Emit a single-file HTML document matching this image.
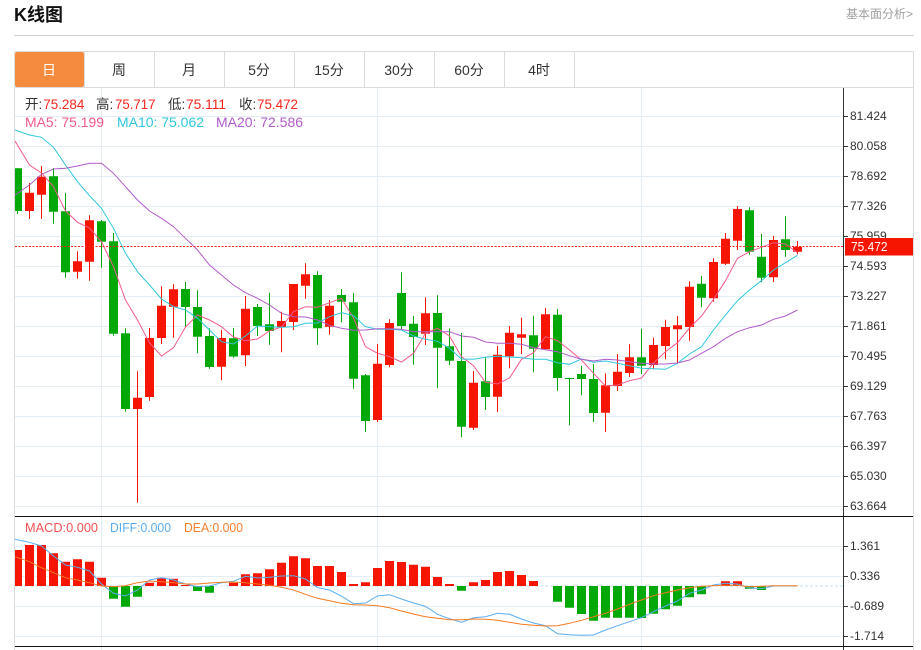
<!DOCTYPE html>
<html><head><meta charset="utf-8"><title>K线图</title>
<style>
html,body{margin:0;padding:0;background:#fff;width:921px;height:650px;overflow:hidden}
svg{display:block}
text{font-family:"Liberation Sans","Noto Sans CJK SC",sans-serif}
</style></head><body>
<svg width="921" height="650" viewBox="0 0 921 650" xmlns="http://www.w3.org/2000/svg">
<text x="14" y="21" font-size="18" font-weight="bold" fill="#111">K线图</text>
<text x="846" y="18" font-size="12" fill="#a0a0a0" textLength="67" lengthAdjust="spacingAndGlyphs">基本面分析&gt;</text>
<path d="M14 35.5H914" stroke="#cfcfcf" fill="none"/>
<path d="M14 51.5H914M14 87.5H914M14.5 51V650M913.5 51V650M84.5 52V87M154.5 52V87M224.5 52V87M294.5 52V87M364.5 52V87M434.5 52V87M504.5 52V87M574.5 52V87" stroke="#dcdcdc" fill="none"/>
<rect x="15" y="52" width="69" height="35" rx="2" fill="#F58B3F"/>
<g font-size="14" fill="#333" text-anchor="middle">
<text x="49" y="75" fill="#fff">日</text>
<text x="119" y="75">周</text>
<text x="189" y="75">月</text>
<text x="259" y="75">5分</text>
<text x="329" y="75">15分</text>
<text x="399" y="75">30分</text>
<text x="469" y="75">60分</text>
<text x="539" y="75">4时</text>
</g>
<path d="M15 116.5H843M15 146.5H843M15 176.5H843M15 206.5H843M15 236.5H843M15 266.5H843M15 296.5H843M15 326.5H843M15 356.5H843M15 386.5H843M15 416.5H843M15 446.5H843M15 476.5H843M15 506.5H843M15 546.5H843M15 576.5H843M15 606.5H843M15 636.5H843M101.5 88V650M377.5 88V650M641.5 88V650" stroke="#E4EDF3" fill="none"/>
<g font-size="13.5">
<g fill="#333"><text x="25" y="109" font-size="13.5">开:</text><text x="96" y="109">高:</text><text x="168" y="109">低:</text><text x="239" y="109">收:</text></g>
<g fill="#F5261E"><text x="43.3" y="109" textLength="41" lengthAdjust="spacingAndGlyphs">75.284</text><text x="115" y="109" textLength="40.5" lengthAdjust="spacingAndGlyphs">75.717</text><text x="186" y="109" textLength="40" lengthAdjust="spacingAndGlyphs">75.111</text><text x="257" y="109" textLength="41" lengthAdjust="spacingAndGlyphs">75.472</text></g>
<text x="25" y="127" fill="#F25A8C" textLength="79" lengthAdjust="spacingAndGlyphs">MA5: 75.199</text>
<text x="117" y="127" fill="#2EC7DC" textLength="87" lengthAdjust="spacingAndGlyphs">MA10: 75.062</text>
<text x="216" y="127" fill="#B15BC9" textLength="87" lengthAdjust="spacingAndGlyphs">MA20: 72.586</text>
</g>
<!-- green candles -->
<path fill="#00A808" d="M17 168h1V214h-1zM15 168.3h7V211h-7z
M53 168h1V223.7h-1zM49 176.3h9V211.7h-9z
M65 193h1V277.7h-1zM61 211.3h9V272.3h-9z
M101 220h1V267.7h-1zM97 221.3h9V241.7h-9z
M113 233h1V335.7h-1zM109 241.3h9V333.7h-9z
M125 328.3h1V411.7h-1zM121 333.3h9V409h-9z
M185 282h1V327h-1zM181 289h9V307h-9z
M197 290.3h1V353.3h-1zM193 307h9V336.7h-9z
M209 328.3h1V368.7h-1zM205 336h9V367h-9z
M233 328h1V357.7h-1zM229 338.3h9V356.5h-9z
M257 304h1V336h-1zM253 307h9V326h-9z
M269 292.7h1V344.7h-1zM265 324.3h9V331h-9z
M317 271.3h1V344.7h-1zM313 275h9V328.3h-9z
M341 289h1V322.3h-1zM337 295h9V301.7h-9z
M353 293h1V388.7h-1zM349 302.3h9V378.7h-9z
M365 374h1V432h-1zM361 375.3h9V421h-9z
M401 272.3h1V329.3h-1zM397 293h9V326h-9z
M413 316h1V364.7h-1zM409 323.7h9V337h-9z
M437 295.3h1V388.3h-1zM433 313h9V347.7h-9z
M449 328.3h1V365h-1zM445 346.3h9V360.7h-9z
M461 333h1V437.3h-1zM457 361h9V426.7h-9z
M485 356.7h1V410h-1zM481 381.3h9V397h-9z
M533 315.7h1V372.3h-1zM529 335.3h9V348.7h-9z
M557 309h1V390.7h-1zM553 314.7h9V378h-9z
M569 377.7h1V425.3h-1zM565 378h9V379h-9z
M581 365.7h1V395.3h-1zM577 374h9V379h-9z
M593 364.3h1V422h-1zM589 379h9V413h-9z
M641 328.7h1V374h-1zM637 357.3h9V365.7h-9z
M701 276h1V307.3h-1zM697 283.7h9V297.7h-9z
M749 207.3h1V254.7h-1zM745 210.3h9V251.7h-9z
M761 234h1V282.3h-1zM757 256.7h9V277.7h-9z
M785 216.3h1V256.7h-1zM781 239.3h9V250h-9z"/>
<!-- red candles -->
<path fill="#F51500" d="M29 183h1V219h-1zM25 192.7h9V211h-9z
M41 166h1V219h-1zM37 176.7h9V194.7h-9z
M77 251.3h1V278.7h-1zM73 261.3h9V271.7h-9z
M89 215.3h1V280.7h-1zM85 220.3h9V261.7h-9z
M137 371.3h1V502.7h-1zM133 397.7h9V409h-9z
M149 328h1V400.7h-1zM145 338h9V397h-9z
M161 286.3h1V344h-1zM157 305.7h9V338h-9z
M173 284.3h1V337.7h-1zM169 289.3h9V306.7h-9z
M221 330h1V380.3h-1zM217 338h9V366.7h-9z
M245 296h1V366h-1zM241 308.7h9V355.3h-9z
M281 311.7h1V352.3h-1zM277 321h9V327.3h-9z
M293 284h1V330h-1zM289 284h9V322h-9z
M305 263.3h1V298.7h-1zM301 274.3h9V285.7h-9z
M329 300h1V334.7h-1zM325 305.7h9V326.7h-9z
M377 344h1V422h-1zM373 363.7h9V420h-9z
M389 319.3h1V367.3h-1zM385 323h9V365h-9z
M425 297.3h1V345h-1zM421 313.3h9V333.7h-9z
M473 371h1V430h-1zM469 382.7h9V427.7h-9z
M497 346h1V412h-1zM493 354.7h9V396.7h-9z
M509 326h1V368.3h-1zM505 332.7h9V356.3h-9z
M521 317.7h1V354h-1zM517 334.3h9V337.7h-9z
M545 308h1V349.3h-1zM541 314.3h9V349.3h-9z
M605 373.3h1V432h-1zM601 385.3h9V412.7h-9z
M617 354h1V391h-1zM613 371.7h9V386h-9z
M629 344.3h1V377h-1zM625 357.3h9V373h-9z
M653 337.7h1V369.3h-1zM649 345h9V365h-9z
M665 319.7h1V359.3h-1zM661 327h9V346h-9z
M677 316h1V363.3h-1zM673 325.3h9V329.3h-9z
M689 281.3h1V340.7h-1zM685 286.7h9V327h-9z
M713 258.3h1V301.7h-1zM709 262h9V298.3h-9z
M725 233h1V265h-1zM721 238.7h9V263.7h-9z
M737 206h1V250h-1zM733 209h9V240.7h-9z
M773 236h1V282h-1zM769 240h9V277.3h-9z
M797 241h1V254.3h-1zM793 246.7h9V251.7h-9z"/>
<!-- MA lines -->
<polyline fill="none" stroke="#F25A8C" stroke-width="1" points="15,141 29.5,165 41.5,173 53.5,186.7 65.5,211 77.5,222.3 89.5,228 101.5,241.7 113.5,266.7 125.5,300 137.5,320 149.5,343 161.5,356 173.5,347.7 185.5,327 197.5,315 209.5,320 221.5,326.7 233.5,337 245.5,340.7 257.5,339 269.5,331 281.5,327 293.5,311.7 305.5,306.7 317.5,307.3 329.5,302.7 341.5,298.3 353.5,318 365.5,346.7 377.5,353.3 389.5,356.7 401.5,362 413.5,353.3 425.5,333.3 437.5,328.3 449.5,336 461.5,356.7 473.5,365.7 485.5,382.3 497.5,384 509.5,378 521.5,359.3 533.5,352.7 545.5,336.7 557.5,340.7 569.5,350 581.5,360 593.5,373.3 605.5,386 617.5,385 629.5,380.7 641.5,378 653.5,363 665.5,351.7 677.5,342.7 689.5,328 701.5,316 713.5,299.3 725.5,280.7 737.5,258.3 749.5,251.7 761.5,247.3 773.5,242.7 785.5,244 797.5,252.7"/>
<polyline fill="none" stroke="#2EC7DC" stroke-width="1" points="15,130 29.5,135 41.5,137.3 53.5,147.3 65.5,165 77.5,181.7 89.5,195.7 101.5,208.3 113.5,228.3 125.5,253.3 137.5,271.7 149.5,285 161.5,299 173.5,306.7 185.5,310 197.5,318.3 209.5,330 221.5,341.7 233.5,344 245.5,336 257.5,326 269.5,326.7 281.5,327.3 293.5,326.7 305.5,323.3 317.5,323 329.5,316.7 341.5,312.7 353.5,315.7 365.5,326.7 377.5,329.3 389.5,329.3 401.5,330 413.5,336 425.5,339.3 437.5,341.3 449.5,348.3 461.5,359 473.5,359.3 485.5,357.3 497.5,356.3 509.5,357 521.5,357.7 533.5,359.3 545.5,359.3 557.5,362.7 569.5,364.3 581.5,359 593.5,362.3 605.5,361 617.5,363.3 629.5,365.7 641.5,368.3 653.5,368.7 665.5,369.3 677.5,363.3 689.5,354 701.5,346.7 713.5,330 725.5,315 737.5,300.7 749.5,290 761.5,280.7 773.5,270 785.5,262.7 797.5,255.3"/>
<polyline fill="none" stroke="#B15BC9" stroke-width="1" points="15,195 29.5,185 41.5,174.3 53.5,169 65.5,168.3 77.5,166 89.5,163.3 101.5,163.3 113.5,173.3 125.5,186.7 137.5,200 149.5,211 161.5,218.3 173.5,226.7 185.5,238.3 197.5,250 209.5,265 221.5,275 233.5,285 245.5,292.7 257.5,298.3 269.5,305 281.5,313.3 293.5,316.7 305.5,317 317.5,320 329.5,325.3 341.5,328.3 353.5,330.3 365.5,330 377.5,328.7 389.5,328.7 401.5,329.3 413.5,331.7 425.5,331.7 437.5,331.7 449.5,331.7 461.5,336 473.5,337.3 485.5,342 497.5,343.3 509.5,343.3 521.5,344.3 533.5,347.7 545.5,349.7 557.5,351.7 569.5,355.7 581.5,359.3 593.5,361 605.5,359.3 617.5,360 629.5,361.7 641.5,363.3 653.5,364 665.5,364 677.5,363 689.5,360 701.5,353.3 713.5,346.7 725.5,338.3 737.5,331.7 749.5,327.7 761.5,325 773.5,319.3 785.5,316 797.5,310"/>
<!-- last price -->
<path d="M15 246.5H843" stroke="#F5261E" stroke-dasharray="2 1.5" fill="none"/>
<!-- axis -->
<path d="M843.5 88V650" stroke="#333" fill="none"/>
<path d="M15 516.5H913M15 646.5H913" stroke="#111" fill="none"/>
<path d="M844 116.5h4M844 146.5h4M844 176.5h4M844 206.5h4M844 236.5h4M844 266.5h4M844 296.5h4M844 326.5h4M844 356.5h4M844 386.5h4M844 416.5h4M844 446.5h4M844 476.5h4M844 506.5h4M844 546.5h4M844 576.5h4M844 606.5h4M844 636.5h4" stroke="#333" fill="none"/>
<g font-size="12" fill="#333">
<text x="850" y="120">81.424</text><text x="850" y="150">80.058</text><text x="850" y="180">78.692</text><text x="850" y="210">77.326</text><text x="850" y="240">75.959</text><text x="850" y="270">74.593</text><text x="850" y="300">73.227</text><text x="850" y="330">71.861</text><text x="850" y="360">70.495</text><text x="850" y="390">69.129</text><text x="850" y="420">67.763</text><text x="850" y="450">66.397</text><text x="850" y="480">65.030</text><text x="850" y="510">63.664</text>
<text x="850" y="550">1.361</text><text x="850" y="580">0.336</text><text x="850" y="610">-0.689</text><text x="850" y="640">-1.714</text>
</g>
<rect x="845" y="238" width="68" height="17.5" fill="#F51500"/>
<text x="851" y="251" font-size="12.5" fill="#fff" textLength="36.5" lengthAdjust="spacingAndGlyphs">75.472</text>
<!-- MACD -->
<g font-size="13">
<text x="25" y="532" fill="#F25050" textLength="73" lengthAdjust="spacingAndGlyphs">MACD:0.000</text>
<text x="110" y="532" fill="#5AADF0" textLength="61" lengthAdjust="spacingAndGlyphs">DIFF:0.000</text>
<text x="184" y="532" fill="#F58030" textLength="59" lengthAdjust="spacingAndGlyphs">DEA:0.000</text>
</g>
<path d="M15 586H843" stroke="#BFE0EE" stroke-dasharray="3 2" fill="none"/>
<path fill="#F51500" d="M15 550h7V586h-7zM25 545h9V586h-9zM37 545h9V586h-9zM49 553.3h9V586h-9zM61 561.7h9V586h-9zM73 559.3h9V586h-9zM85 561.7h9V586h-9zM97 577.7h9V586h-9z
M145 582.7h9V586h-9zM157 577.7h9V586h-9zM169 578.7h9V586h-9zM181 585h9V586h-9z
M229 582.7h9V586h-9zM241 574.3h9V586h-9zM253 573.3h9V586h-9zM265 569.3h9V586h-9zM277 562.7h9V586h-9zM289 556.3h9V586h-9zM301 558.3h9V586h-9zM313 566h9V586h-9zM325 566h9V586h-9zM337 572h9V586h-9zM349 584h9V586h-9zM361 582.3h9V586h-9zM373 568h9V586h-9zM385 561h9V586h-9zM397 562h9V586h-9zM409 564.7h9V586h-9zM421 566.7h9V586h-9zM433 577h9V586h-9zM445 584h9V586h-9z
M469 582.3h9V586h-9zM481 580h9V586h-9zM493 572h9V586h-9zM505 571h9V586h-9zM517 575h9V586h-9zM529 581h9V586h-9z
M721 581.3h9V586h-9zM733 581.3h9V586h-9z"/>
<path fill="#00A808" d="M109 586h9V598.7h-9zM121 586h9V606.7h-9zM133 586h9V596.7h-9zM193 586h9V591h-9zM205 586h9V592.7h-9z
M457 586h9V590.7h-9z
M745 586h9V588.7h-9zM757 586h9V590h-9z
M553 586h9V601.7h-9zM565 586h9V607.7h-9zM577 586h9V614h-9zM589 586h9V620.7h-9zM601 586h9V617.7h-9zM613 586h9V617.7h-9zM625 586h9V617.7h-9zM637 586h9V618h-9zM649 586h9V613.7h-9zM661 586h9V609.3h-9zM673 586h9V605.7h-9zM685 586h9V597.3h-9zM697 586h9V594.3h-9z"/>
<polyline fill="none" stroke="#5AADF0" stroke-width="1" points="15,539.3 29.5,542.3 41.5,546 53.5,556 65.5,565 77.5,567.3 89.5,571 101.5,584 113.5,593.3 125.5,596 137.5,590 149.5,580 161.5,577.7 173.5,580 185.5,584 197.5,586.7 209.5,586 221.5,582.7 233.5,581.3 245.5,576.3 257.5,578 269.5,577.3 281.5,576 293.5,575.7 305.5,579 317.5,587.7 329.5,590 341.5,596 353.5,603.7 365.5,603 377.5,596 389.5,594.7 401.5,599 413.5,603 425.5,606.3 437.5,614.3 449.5,618.7 461.5,622.3 473.5,617.7 485.5,616.7 497.5,613.3 509.5,614.3 521.5,619 533.5,623 545.5,625.7 557.5,633.7 569.5,634.7 581.5,635.3 593.5,635 605.5,630 617.5,625.7 629.5,621.7 641.5,617.7 653.5,611.7 665.5,606 677.5,601 689.5,593.3 701.5,590 713.5,585 725.5,583.3 737.5,584 749.5,587.7 761.5,588.7 773.5,586 785.5,586 797.5,586"/>
<polyline fill="none" stroke="#F57A20" stroke-width="1" points="15,556.7 29.5,561.7 41.5,567.7 53.5,572.7 65.5,577.7 77.5,580 89.5,582.7 101.5,586 113.5,586.7 125.5,585.7 137.5,582.7 149.5,581 161.5,581.7 173.5,582.7 185.5,584 197.5,584 209.5,583 221.5,582.3 233.5,582 245.5,582.7 257.5,584 269.5,585.3 281.5,587.3 293.5,590 305.5,594.3 317.5,598.3 329.5,600.7 341.5,603.3 353.5,604.7 365.5,605 377.5,605.7 389.5,607.7 401.5,611 413.5,614 425.5,616.7 437.5,618.3 449.5,619.7 461.5,619.7 473.5,619 485.5,619.3 497.5,620.3 509.5,622.3 521.5,624.3 533.5,625.3 545.5,626 557.5,625.7 569.5,623.3 581.5,620.3 593.5,616.7 605.5,613.3 617.5,609 629.5,604.3 641.5,600 653.5,595.7 665.5,592.7 677.5,590 689.5,587.7 701.5,586.3 713.5,585.7 725.5,585.3 737.5,585.3 749.5,586.7 761.5,586.3 773.5,585.7 785.5,585.7 797.5,585.7"/>
</svg>
</body></html>
